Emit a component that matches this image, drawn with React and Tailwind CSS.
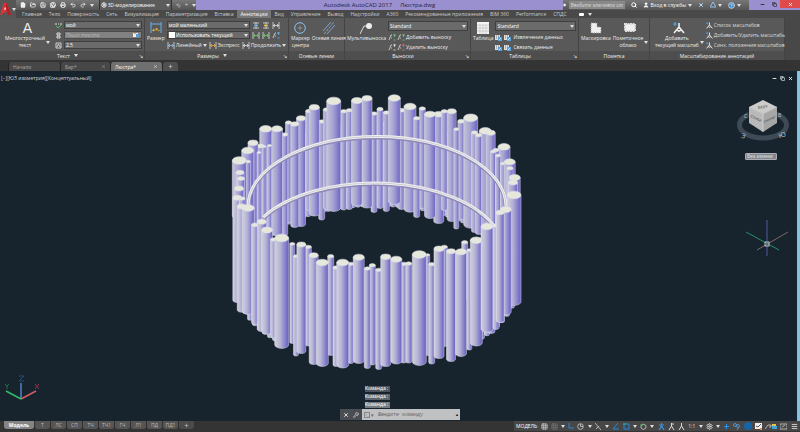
import React, { useState } from "react"
import {
  File, FolderOpen, Save, SaveAll, Printer, Undo2, Redo2, Settings, Search, User, CircleHelp,
  Minus, Copy, X, Plus, Wrench, Menu, Play, Grid3x3,
} from "lucide-react"

const ribbonTabs = [
  "Главная", "Тело", "Поверхность", "Сеть", "Визуализация", "Параметризация", "Вставка", "Аннотации", "Вид",
  "Управление", "Вывод", "Надстройки", "A360", "Рекомендованные приложения", "BIM 360", "Performance", "СПДС",
]

const layoutTabs = ["Модель", "Т", "ЛС", "СП", "ТЧ", "ТЧ1", "ГЧ", "Л1", "ПД", "ПД1"]

// [center x, cap y, width, bottom y]
const backTubes = [
  [301, 118.7, 9, 227], [308.7, 111.5, 6, 211], [288.5, 123, 6, 223], [321.7, 122, 6, 220.5], [326.3, 110, 6, 210],
  [343.7, 111.7, 6, 210.5], [349.3, 110.7, 6, 210], [374, 114, 6, 213], [380, 109.5, 6, 209], [386.3, 113, 6, 212],
  [314.3, 107.7, 10, 216.5], [294.7, 124.5, 8, 228], [333.7, 101.5, 14, 212], [357, 101, 11, 206.5], [367, 98.8, 10, 208.5],
  [401.3, 110.7, 7, 210], [394.3, 98.5, 12, 205], [422.3, 109, 6, 209], [410, 107, 12, 212.7], [416.7, 118.7, 6, 218],
  [438.7, 114.7, 10, 224], [430, 114.7, 11, 219], [444.3, 111.7, 6, 211], [451.7, 111.7, 9, 222], [461.3, 121.7, 7, 220],
  [456.3, 129.7, 5, 229.5], [470.7, 118.3, 14, 228.7], [485.3, 131.3, 12, 236], [474.5, 133, 6, 233], [478.5, 135.7, 6, 235],
  [490.7, 133.3, 9, 240], [284.7, 135, 6, 236], [274.5, 136, 6, 236], [277, 129.3, 11, 236], [265.7, 129.3, 12, 236],
  [260.5, 146.5, 7, 240], [253, 143.3, 10, 240], [259, 153, 4, 236], [264, 147, 4, 240], [269.5, 146, 4, 240],
  [247.7, 151, 12, 240],
  [504, 147.3, 12, 240], [496, 150.5, 6, 240], [493, 152, 5, 240], [498, 156, 5, 240], [503, 164, 5, 240],
  [509.7, 162.3, 11, 240], [510, 168.7, 6, 240],
  [514.7, 178, 11, 240], [513, 183, 9, 240], [248, 162, 5, 220], [239.3, 161, 14, 220],
  [240, 173, 8, 220], [241, 179, 7, 220], [239, 189, 9, 220],
]

const frontTubes = [
  [237.3, 198.3, 9, 303], [242, 199, 6, 300], [241.7, 207, 9, 312.7], [248.3, 208.5, 12, 315],
  [255, 225.3, 7, 325], [261.7, 222.3, 9, 332], [267, 230.5, 11, 334.7], [273.5, 240, 6, 338.5],
  [292.3, 244.3, 5, 344], [281.7, 238.5, 14, 349], [296, 256.7, 5, 356.5], [308.3, 247.3, 6, 346.5], [301.3, 245, 9, 354],
  [313.7, 255.7, 9, 365], [330.7, 256.7, 6, 356], [322.3, 263, 12, 367], [336, 268, 6, 367], [350.7, 264.3, 6, 364],
  [342.7, 263, 12, 368.5], [358.7, 257.7, 11, 364], [372.3, 265.7, 6, 365.5], [367.3, 269, 6, 369], [378.7, 270.3, 6, 370],
  [385.7, 257.3, 10, 367], [403.7, 264.3, 6, 363.5], [396.3, 259.7, 11, 364.5], [408.7, 264, 6, 363.5],
  [427.7, 255.3, 4, 356], [419.3, 255, 14, 366], [431.7, 264.7, 6, 364.5], [444.3, 247.3, 6, 347], [439, 249.3, 10, 359],
  [451, 251.7, 9, 362], [464.7, 242.7, 6, 300], [461, 252.3, 11, 357], [469.3, 250.7, 5, 350.5], [476.3, 240.7, 12, 346.5],
  [491, 228, 8, 334], [487, 227, 12, 332.7], [496, 226, 6, 330], [514, 195.5, 14, 306], [505.7, 210, 11, 315.3],
  [500, 213, 8, 323],
]

// thin tubes between the main ones, placed along the ring
const ringFill = (side, from, to, top, length) => {
  const tubes = []
  for (let x = from; x <= to; x += 5) {
    const k = (x - 377) / 140
    tubes.push([x, top + side * 78 * Math.sqrt(1 - k * k), 5, top + length + side * 78 * Math.sqrt(1 - k * k)])
  }
  return tubes
}

const backFill = ringFill(-1, 248, 508, 202, 83)
const frontFill = [...ringFill(1, 240, 285, 196, 92), ...ringFill(1, 482, 514, 196, 92)]

const Tube = ({ data, fill }) => {
  const [x, y, w, bottom] = data
  const r = w / 2
  const ry = r * 0.55
  return (
    <g stroke="#dddef0" strokeWidth="0.5">
      <path d={`M${x - r} ${y}V${bottom - ry}A${r} ${ry} 0 0 0 ${x + r} ${bottom - ry}V${y}Z`} fill={fill} />
      <ellipse cx={x} cy={y} rx={r} ry={ry} fill="#e6e8dc" />
    </g>
  )
}

const Chandelier = () => (
  <svg className="block h-full w-full" viewBox="0 72 797 349" role="img" aria-label="Люстра">
    <defs>
      <linearGradient id="back">
        <stop offset="0" stopColor="#c4c3d6" />
        <stop offset="0.45" stopColor="#a6a3d4" />
        <stop offset="1" stopColor="#6c64c2" />
      </linearGradient>
      <linearGradient id="front">
        <stop offset="0" stopColor="#d2d1da" />
        <stop offset="0.4" stopColor="#b5b3d6" />
        <stop offset="1" stopColor="#665ec2" />
      </linearGradient>
    </defs>
    {backFill.map((t, i) => <Tube key={i} data={t} fill="url(#back)" />)}
    {backTubes.map((t, i) => <Tube key={i} data={t} fill="url(#back)" />)}
    <g fill="none">
      <path d="M248 208A129 70 0 0 1 506 208M263 219A129 69 0 0 1 496 230" stroke="#8d89b8" strokeWidth="4" />
      <path d="M248 207A129 70 0 0 1 506 207M263 218A129 69 0 0 1 496 229" stroke="#f0f0ee" strokeWidth="3" />
      <path d="M248 207A129 70 0 0 1 506 207M263 218A129 69 0 0 1 496 229" stroke="#c4c3d0" strokeWidth="0.8" />
    </g>
    {frontFill.map((t, i) => <Tube key={i} data={t} fill="url(#front)" />)}
    {frontTubes.map((t, i) => <Tube key={i} data={t} fill="url(#front)" />)}
  </svg>
)

const Caret = () => (
  <svg className="pointer-events-none h-[3px] w-1 shrink-0" viewBox="0 0 4 3"><path d="M0 0h4L2 3z" fill="#e0e0e0" /></svg>
)

const Combo = ({ label, value, icon }) => (
  <div className="flex h-2 min-w-0 flex-1 items-center gap-px border border-[#3f3f3f] bg-[#6b6b6b] px-px">
    {icon}
    <select aria-label={label} className="min-w-0 flex-1 appearance-none bg-transparent text-[5px] leading-[6px] text-white outline-none">
      <option>{value}</option>
    </select>
    <Caret />
  </div>
)

const SmallButton = ({ icon, children, caret }) => (
  <button className="flex h-2 items-center gap-px whitespace-nowrap hover:bg-[#6d6d6d]">
    {icon}
    {children}
    {caret && <Caret />}
  </button>
)

const BigButton = ({ icon, lines, caret }) => (
  <button className="flex shrink-0 flex-col items-center gap-px whitespace-nowrap pt-[3px] leading-[7px] hover:bg-[#6d6d6d]">
    <span className="flex h-[13px] items-center">{icon}</span>
    <span className="flex items-center gap-px">
      <span>{lines.map((l) => <span key={l} className="block">{l}</span>)}</span>
      {caret && <Caret />}
    </span>
  </button>
)

const Panel = ({ title, className, children, caret, launcher }) => (
  <section className={`flex shrink-0 flex-col border-r border-[#444] ${className}`}>
    <div className="flex flex-1 gap-0.5 px-0.5">{children}</div>
    <div className="flex h-[9px] items-center justify-center gap-1 bg-[#4e4e4e] leading-[6px]">
      <span className={launcher ? "flex flex-1 items-center justify-center gap-1" : "flex items-center gap-1"}>
        {title}
        {caret && <Caret />}
      </span>
      {launcher && <button aria-label={`${title}: параметры`} className="pr-px text-[5px]">↘</button>}
    </div>
  </section>
)

const rows = "flex min-w-0 flex-col gap-0.5 pt-[3px]"

const DimIcon = ({ color = "#8fb9e0" }) => (
  <svg className="h-[7px] w-2 shrink-0" viewBox="0 0 8 7" fill="none" stroke="#ddd" strokeWidth="0.8">
    <path d="M1 0v7M7 0v7" />
    <path d="M1 3.5h6M3 2L1.5 3.5 3 5M5 2l1.500 1.500L5 5" stroke={color} />
  </svg>
)

const CrossIcon = ({ color = "#e5bf4e" }) => (
  <svg className="h-[7px] w-2 shrink-0" viewBox="0 0 8 7" fill="none" stroke="#d8d8d8" strokeWidth="0.8">
    <path d="M1 1h6M1 6h6M4 0v7" />
    <path d="M2 3.500h4" stroke={color} strokeWidth="1.500" />
  </svg>
)

const LeaderIcon = ({ color = "#69c585" }) => (
  <svg className="h-[7px] w-2 shrink-0" viewBox="0 0 8 7" fill="none" stroke="#ddd" strokeWidth="0.8">
    <path d="M1 6l2-5h1M3 4h1" />
    <path d="M5 1h3M6.500 0v3M5.500 6h2" stroke={color} />
  </svg>
)

const SheetIcon = () => (
  <svg className="mr-px h-[7px] w-[7px] shrink-0" viewBox="0 0 7 7">
    <path d="M0 1h5v5H0z" fill="#e0e0e0" />
    <path d="M1 2h1M3 2h1M1 4h1" stroke="#555" strokeWidth="0.7" />
    <path d="M3 3h4v4H3z" fill="#58a3da" />
    <path d="M4 6l2-2" stroke="#fff" strokeWidth="0.7" />
  </svg>
)

const ScaleIcon = ({ big }) => (
  <svg className={big ? "h-3 w-3 shrink-0" : "h-[7px] w-[7px] shrink-0"} viewBox="0 0 12 12" fill="none" stroke="#eee" strokeWidth="1.600">
    <path d="M6 1v4L1 11M6 5l5 6M4 8l2 1 2-1" />
    <path d="M0 2h4M2 0v4" stroke="#4da3e0" strokeWidth="1.200" />
  </svg>
)

const TitleBar = () => (
  <div className="flex h-2.5 items-center text-[5px]">
    <div className="flex h-full w-[180px] shrink-0 items-center justify-between bg-linear-to-b from-[#777] to-[#555] pl-1 text-[#eee]">
      <div className="flex items-center gap-1">
        <button aria-label="Создать"><File size={6} fill="#eee" /></button>
        <button aria-label="Открыть"><FolderOpen size={6} strokeWidth={3} /></button>
        <button aria-label="Сохранить"><Save size={6} strokeWidth={3} /></button>
        <button aria-label="Сохранить как"><SaveAll size={6} strokeWidth={3} /></button>
        <button aria-label="Печать"><Printer size={6} strokeWidth={3} /></button>
        <button aria-label="Отменить"><Undo2 size={6} strokeWidth={3} /></button>
        <button aria-label="Повторить"><Redo2 size={6} strokeWidth={3} /></button>
        <Caret />
      </div>
      <div className="flex h-2.5 w-[73px] items-center gap-px border-x border-[#333] bg-[#5c5c5c] px-px">
        <Settings size={6} strokeWidth={4} />
        <select aria-label="Рабочее пространство" className="min-w-0 flex-1 appearance-none bg-transparent text-[5px] leading-[6px] text-white">
          <option>3D-моделирование</option>
        </select>
        <Caret />
      </div>
      <span className="flex w-5 items-center gap-1"><Undo2 size={5} />÷<Caret /></span>
    </div>
    <h1 className="flex h-full min-w-0 flex-1 items-center justify-center gap-2 whitespace-nowrap bg-[#9b90cf] text-[6px] leading-[8px] text-[#25213c]">
      <span>Autodesk AutoCAD 2017</span>
      <span>Люстра.dwg</span>
    </h1>
    <div className="flex h-full w-[186px] shrink-0 items-center gap-1.5 bg-linear-to-b from-[#777] to-[#555] pr-2 text-white">
      <div className="flex h-full flex-1 items-center gap-0.5">
        <Play size={4} fill="#fff" />
        <input aria-label="Поиск" placeholder="Введите ключевое слово/фразу" className="h-2 w-full min-w-0 bg-[#898989] px-0.5 text-[5px] italic placeholder-[#ddd]" />
      </div>
      <button aria-label="Найти"><Search size={6} strokeWidth={4} /></button>
      <button className="flex items-center gap-0.5 whitespace-nowrap"><User size={6} fill="#fff" />Вход в службы<Caret /></button>
      <button aria-label="Exchange" className="text-[#b5daf8]"><X size={6} strokeWidth={4} /></button>
      <button aria-label="A360" className="flex items-center gap-0.5"><svg className="h-1.5 w-1.5" viewBox="0 0 6 6"><path d="M3 0l3 5H0z" fill="none" stroke="#8fc3ef" /></svg><Caret /></button>
      <button aria-label="Справка" className="flex items-center gap-0.5"><CircleHelp size={7} fill="#3f86c4" /><Caret /></button>
    </div>
    <div className="flex h-full w-[51px] shrink-0 items-start bg-[#9b90cf] text-[#222]">
      <button aria-label="Свернуть" className="flex h-2 flex-1 items-center justify-center pl-2"><Minus size={5} strokeWidth={4} /></button>
      <button aria-label="Развернуть" className="flex h-2 flex-1 items-center justify-center"><Copy size={5} strokeWidth={3} /></button>
      <button aria-label="Закрыть" className="flex h-2 w-5 items-center justify-center bg-[#df4a4d] text-white"><X size={5} strokeWidth={4} /></button>
    </div>
  </div>
)

const Ribbon = () => (
  <div className="flex h-[42px] overflow-hidden bg-[#595959] text-[5px] text-[#eee]">
    <Panel title="Текст" className="w-[145px]" caret launcher>
      <span className="w-px" />
      <BigButton icon={<span className="font-['Liberation_Sans'] text-[14px] leading-[12px]">A</span>} lines={["Многострочный", "текст"]} caret />
      <span className="w-px" />
      <div className={`${rows} flex-1`}>
        <div className="flex items-center gap-0.5">
          <svg className="h-[7px] w-[7px] shrink-0" viewBox="0 0 7 7" fill="none"><path d="M0 2h2M3 2h1M5 2h2" stroke="#ddd" strokeWidth="1.200" /><path d="M1 4l2 2 3-3" stroke="#4fc05a" /></svg>
          <Combo label="Стиль текста" value="мой" />
        </div>
        <div className="flex items-center gap-0.5">
          <svg className="h-[7px] w-[7px] shrink-0" viewBox="0 0 7 7"><path d="M2 1h3v2H2zM2 4h3v2H2z" fill="none" stroke="#ddd" /></svg>
          <div className="flex h-2 min-w-0 flex-1 items-center border border-[#4b4b4b] bg-[#818181] px-px">
            <input aria-label="Поиск текста" placeholder="Поиск текста" className="min-w-0 flex-1 text-[5px] italic placeholder-[#bbb]" />
            <svg className="h-1.5 w-[7px] shrink-0" viewBox="0 0 7 6"><path d="M0 1h5v4H0z" fill="#eee" /><path d="M3 2h3v3H3z" fill="#5c9fd8" /><path d="M1 1h2v1H1z" fill="#e8b13c" /></svg>
          </div>
        </div>
        <div className="flex items-center gap-0.5">
          <svg className="h-[7px] w-[7px] shrink-0" viewBox="0 0 7 7"><path d="M1 1h5v5H1zM2 5l1.500-3L5 5" fill="none" stroke="#eee" strokeWidth="0.8" /></svg>
          <Combo label="Высота текста" value="2.5" />
        </div>
      </div>
    </Panel>
    <Panel title="Размеры" className="w-[144px]" caret launcher>
      <BigButton
        icon={<svg className="h-3 w-3" viewBox="0 0 12 12" fill="none" stroke="#6fb0e8"><path d="M1 0v11M11 0v11M1 2h10" /><path d="M3 9a3.500 3.500 0 0 1 6 0" stroke="#e8b13c" strokeDasharray="2 1" strokeWidth="2" /></svg>}
        lines={["Размер"]}
      />
      <div className={`${rows} flex-1`}>
        <div className="flex items-center gap-0.5 pr-1.5">
          <Combo label="Размерный стиль" value="мой маленький" />
          <CrossIcon color="#6fb0e8" /><CrossIcon /><DimIcon color="#ddd" />
        </div>
        <div className="flex items-center gap-0.5 pr-1.5">
          <Combo label="Слой размеров" value="Использовать текущий" icon={<span className="h-1.5 w-1.5 shrink-0 bg-white" />} />
          <DimIcon color="#6dcb6b" /><DimIcon color="#6dcb6b" /><LeaderIcon color="#64b8f0" />
        </div>
        <div className="flex items-center gap-0.5">
          <SmallButton icon={<DimIcon />} caret>Линейный</SmallButton>
          <SmallButton icon={<DimIcon color="#e8a33c" />}>Экспресс</SmallButton>
          <SmallButton icon={<DimIcon color="#ddd" />} caret>Продолжить</SmallButton>
        </div>
      </div>
    </Panel>
    <Panel title="Осевые линии" className="w-14">
      <BigButton
        icon={<svg className="h-3 w-3" viewBox="0 0 12 12" fill="none" stroke="#8ec2ec"><circle cx="6" cy="6" r="5.300" /><path d="M6 3.500v5M3.500 6h5" stroke="#bbb" strokeWidth="0.500" /></svg>}
        lines={["Маркер", "центра"]}
      />
      <BigButton
        icon={<svg className="h-3 w-3" viewBox="0 0 12 12" fill="none"><path d="M0 9L8 0M4 12l8-9" stroke="#71a9d8" /><path d="M1 12L11 0" stroke="#ccc" strokeWidth="0.600" strokeDasharray="3 1" /></svg>}
        lines={["Осевая линия"]}
      />
    </Panel>
    <Panel title="Выноски" className="w-[126px]" launcher>
      <BigButton
        icon={<svg className="h-3 w-3" viewBox="0 0 12 12"><path d="M0 12L4 4h3" fill="none" stroke="#ddd" /><circle cx="9" cy="4" r="3" fill="#eee" /></svg>}
        lines={["Мультивыноска"]}
      />
      <div className={`${rows} flex-1`}>
        <Combo label="Стиль мультивыноски" value="Standard" />
        <SmallButton icon={<><LeaderIcon /><LeaderIcon color="#6dcb6b" /></>}>Добавить выноску</SmallButton>
        <SmallButton icon={<><LeaderIcon color="#ddd" /><LeaderIcon color="#ef6464" /></>}>Удалить выноску</SmallButton>
      </div>
    </Panel>
    <Panel title="Таблицы" className="w-[108px]" launcher>
      <BigButton
        icon={<svg className="h-3 w-3" viewBox="0 0 12 12"><path d="M0 0h12v12H0z" fill="#f3f3f3" /><path d="M0 3h12M0 6h12M0 9h12M3 3v9M6 3v9M9 3v9" stroke="#aaa" strokeWidth="0.500" /></svg>}
        lines={["Таблица"]}
      />
      <div className={`${rows} flex-1`}>
        <Combo label="Стиль таблицы" value="Standard" />
        <SmallButton icon={<><SheetIcon /><SheetIcon /></>}>Извлечение данных</SmallButton>
        <SmallButton icon={<><SheetIcon /><SheetIcon /></>}>Связать данные</SmallButton>
      </div>
    </Panel>
    <Panel title="Пометка" className="w-[71px]">
      <BigButton
        icon={<svg className="h-3 w-3" viewBox="0 0 12 12"><path d="M1 1h6v4h4v6H1z" fill="#f0f0f0" stroke="#999" strokeDasharray="1 1" /></svg>}
        lines={["Маскировка"]}
      />
      <BigButton
        icon={<svg className="h-3 w-3" viewBox="0 0 12 12"><rect x="1" y="2" width="10" height="7" fill="#f0f0f0" stroke="#ddd" strokeWidth="2" strokeDasharray="2 0.500" /></svg>}
        lines={["Пометочное", "облако"]}
        caret
      />
    </Panel>
    <Panel title="Масштабирование аннотаций" className="w-[135px]">
      <span className="w-px" />
      <BigButton icon={<ScaleIcon big />} lines={["Добавить", "текущий масштаб"]} caret />
      <div className={`${rows} text-[#ddd]`}>
        <SmallButton icon={<ScaleIcon />}>Список масштабов</SmallButton>
        <SmallButton icon={<ScaleIcon />}>Добавить/Удалить масштабы</SmallButton>
        <SmallButton icon={<ScaleIcon />}>Синх. положения масштабов</SmallButton>
      </div>
    </Panel>
    <div className="flex-1 bg-[#484848]" />
  </div>
)

const fileTabs = [
  { name: "Начало", className: "w-[52px] bg-[#474747] text-[#aaa]" },
  { name: "Бар*", className: "w-[50px] bg-[#474747] text-[#aaa]", close: true },
  { name: "Люстра*", className: "w-[52px] bg-[#707070] text-white", close: true },
]

const FileTabs = () => (
  <div className="flex h-[11px] items-end bg-[#343434] pl-2 text-[5px]">
    {fileTabs.map((t) => (
      <div key={t.name} className={`flex h-[9px] items-center justify-between rounded-t-[3px] border-l border-[#252525] px-1 ${t.className}`}>
        <button>{t.name}</button>
        {t.close && <button aria-label={`Закрыть ${t.name}`}><X size={5} /></button>}
      </div>
    ))}
    <button aria-label="Новый чертеж" className="flex h-[9px] w-4 items-center justify-center rounded-t-[3px] border-l border-[#252525] bg-[#505050] text-[#ccc]"><Plus size={5} strokeWidth={3} /></button>
  </div>
)

const ViewCube = () => (
  <svg className="absolute right-[7px] top-7 h-[46px] w-[54px]" viewBox="0 0 54 46">
    <ellipse cx="27" cy="26" rx="23.500" ry="13" fill="none" stroke="#3e4b57" strokeWidth="5" />
    <path d="M12 8L27 2l14 7v15L27 33 13 24z" fill="#17232d" />
    <path d="M13 8L27 1l14 7-14 7z" fill="#cbcbc9" />
    <path d="M13 8l14 7v18L13 24z" fill="#b9b9b9" />
    <path d="M41 8l-14 7v18l14-9z" fill="#a6a6a6" />
    <path d="M13 8l14 7 14-7M27 15v18" fill="none" stroke="#e2e2e2" strokeWidth="0.600" />
    <g fontFamily="Open Sans, sans-serif" fontSize="4" fill="#3f3f3f">
      <text x="22" y="9" transform="rotate(-12 27 8)">Верх</text>
      <text x="14" y="18" transform="rotate(24 14 18)">Слева</text>
      <text x="28" y="24" fontSize="3" transform="rotate(-26 28 24)">Спереди</text>
    </g>
    <g fontFamily="Open Sans, sans-serif" fontSize="7" fill="#c3c8cc">
      <text x="5" y="39" transform="rotate(20 6 38)">З</text>
      <text x="43" y="39" transform="rotate(-20 45 38)">Ю</text>
      <text x="8" y="19" fontSize="5">С</text>
      <text x="42" y="18" fontSize="5">В</text>
    </g>
  </svg>
)

const DrawingArea = () => (
  <main className="relative min-h-0 flex-1 overflow-hidden border-r-3 border-[#86c3e2] bg-[#17232d] text-[5px]">
    <Chandelier />
    <div className="absolute left-px top-1 leading-[7px] text-[#d5d9dc]">[−][ЮЗ изометрия][Концептуальный]</div>
    <div className="absolute right-1 top-[5px] flex items-center gap-[3px] text-white">
      <button aria-label="Свернуть чертеж"><Minus size={5} strokeWidth={4} /></button>
      <button aria-label="Восстановить чертеж"><Copy size={5} strokeWidth={3} /></button>
      <button aria-label="Закрыть чертеж"><X size={5} strokeWidth={4} /></button>
    </div>
    <ViewCube />
    <button className="absolute right-5 top-[82px] h-[7px] w-8 rounded-[1px] border border-[#aaacb3] bg-[#85878f] px-px text-left leading-[5px] text-[#e3e3e3]">Без имени</button>
    <svg className="absolute bottom-[165px] right-2 h-9 w-[44px]" viewBox="0 0 44 36" fill="none">
      <path d="M22 0v36" stroke="#5258a8" />
      <path d="M1 12l33 18" stroke="#27936a" />
      <path d="M12 30l31-18" stroke="#967c74" strokeWidth="0.800" />
      <rect x="20" y="22" width="4" height="4" stroke="#e0e0e0" strokeWidth="0.800" />
    </svg>
    <svg className="absolute bottom-5 left-1 h-[27px] w-9" viewBox="0 0 36 27" fill="none" strokeWidth="1.500">
      <path d="M17 25V9" stroke="#5483c4" />
      <path d="M17 25L2 17" stroke="#30bd67" />
      <path d="M17 25l15-8" stroke="#d05e62" />
      <path d="M15 2h5l-5 5h5" stroke="#254c80" strokeWidth="1" />
      <path d="M1 10l2 2 2-2M3 12v3" stroke="#286b48" strokeWidth="1" />
      <path d="M31 10l4 5M35 10l-4 5" stroke="#91334a" strokeWidth="1" />
    </svg>
    <div className="absolute bottom-px left-[340px] w-30">
      <div className="mb-px ml-[25px] flex w-[25px] flex-col gap-0.5 font-['Liberation_Mono'] text-[5px] leading-[6px] text-white">
        <span className="bg-[#4c555d]">Команда:</span>
        <span className="bg-[#5c646b]">Команда:</span>
        <span className="bg-[#737a80]">Команда:</span>
      </div>
      <div className="flex h-[11px] items-center bg-[#bfc1c3]">
        <div className="flex h-full w-[22px] items-center justify-center gap-1 bg-[#4a4e52] text-white">
          <button aria-label="Закрыть командную строку"><X size={6} strokeWidth={3} /></button>
          <button aria-label="Настройка"><Wrench size={6} /></button>
        </div>
        <span className="flex items-center gap-px px-0.5 text-[#666]"><span className="border border-[#888] text-[4px] leading-[4px]">&gt;_</span>▾</span>
        <input aria-label="Команда" placeholder="Введите команду" className="min-w-0 flex-1 px-0.5 font-['Liberation_Mono'] text-[5px] italic text-[#333] placeholder-[#666]" />
        <span className="px-px text-[4px] text-[#222]">▲</span>
      </div>
    </div>
  </main>
)

const StatusBar = () => (
  <footer className="flex h-[11px] items-start justify-between bg-[#343434] text-[5px] text-[#bbb]">
    <nav className="flex pl-1">
      {layoutTabs.map((t, i) => (
        <button
          key={t}
          className={i === 0
            ? "h-2 w-[30px] rounded-b-[3px] bg-[#858585] font-bold leading-[7px] text-white"
            : "h-2 w-4 rounded-b-[3px] border-l border-[#303030] bg-[#555] leading-[7px]"}
        >
          {t}
        </button>
      ))}
      <button aria-label="Новый лист" className="flex h-2 w-4 items-center justify-center rounded-b-[3px] border-l border-[#303030] bg-[#4b4b4b]"><Plus size={5} strokeWidth={3} /></button>
    </nav>
    <div className="flex h-2.5 w-[286px] items-center justify-between bg-[#474747] px-0.5 text-[#ddd]">
      <button className="text-white">МОДЕЛЬ</button>
      <Grid3x3 size={7} /><Grid3x3 size={7} className="text-[#777]" /><Caret />
      <svg className="h-1.5 w-1.5" viewBox="0 0 6 6"><path d="M1 0v5h5" fill="none" stroke="#2389e0" /></svg>
      <svg className="h-[7px] w-[7px]" viewBox="0 0 7 7" fill="none" stroke="#ccc" strokeWidth="0.800"><circle cx="3.500" cy="3.500" r="2.800" /><path d="M3.500 1v2.500H6" /></svg><Caret />
      <svg className="h-[7px] w-[7px]" viewBox="0 0 7 7"><path d="M0 0l6 7M1 6l3-3" stroke="#ccc" strokeWidth="0.800" /></svg><Caret />
      <svg className="h-[7px] w-[7px]" viewBox="0 0 7 7"><path d="M6 0L1 6h6" fill="none" stroke="#2389e0" /></svg>
      <svg className="h-[7px] w-[7px]" viewBox="0 0 7 7"><path d="M1 1h5v5H1z" fill="none" stroke="#2389e0" /><path d="M0 1h3" stroke="#49b75b" /></svg><Caret />
      <svg className="h-[7px] w-[7px]" viewBox="0 0 7 7" fill="none" stroke="#ccc" strokeWidth="0.800"><path d="M3 1l3 1.500V5L3.500 6.500 1 5V2.500z" /><path d="M0 2h3" stroke="#49b75b" /></svg><Caret />
      <svg className="h-[7px] w-[7px]" viewBox="0 0 7 7" fill="none" stroke="#2e93e8" strokeWidth="1.200"><path d="M3.500 0v3L1 7M3.500 3L6 7M1 2h5" /></svg>
      <svg className="h-[7px] w-[7px]" viewBox="0 0 7 7" fill="none" stroke="#ddd"><path d="M3.500 0v3L1 7M3.500 3L6 7M3 1h3" /></svg>
      <svg className="h-[7px] w-[7px]" viewBox="0 0 7 7" fill="none" stroke="#ddd"><path d="M3.500 0v3L1 7M3.500 3L6 7" /></svg>
      <button>1:1</button><Caret />
      <Settings size={7} strokeWidth={3} /><Caret />
      <Plus size={7} strokeWidth={4} className="text-[#2e93e8]" />
      <svg className="h-[7px] w-[7px]" viewBox="0 0 7 7" fill="none" stroke="#57a2dd" strokeWidth="0.800"><circle cx="2" cy="2" r="1.500" /><circle cx="5" cy="3" r="1.500" /><path d="M4 7l2-3" /></svg>
      <span className="h-2 w-2 rounded-full bg-[#1464a8]" />
      <svg className="h-[7px] w-[7px]" viewBox="0 0 7 7"><path d="M0 0h7v6H0z" fill="#eee" /><path d="M1 3l2 1 3-3" stroke="#555" fill="none" /><path d="M5 5h2v2H5z" fill="#e38b4b" /></svg>
      <svg className="h-[7px] w-3" viewBox="0 0 12 7"><path d="M0 6l3-4h3v2H4" fill="none" stroke="#ccc" strokeWidth="0.800" /><path d="M7 1h4v2H7z" fill="#e8c642" /><path d="M7 3h5v3H7z" fill="#39a5d8" /></svg>
      <svg className="h-[7px] w-[7px]" viewBox="0 0 7 7" fill="none" stroke="#ccc" strokeWidth="0.800"><path d="M0 1h7v5H0zM2 4l3-2" /></svg>
      <button aria-label="Адаптация"><Menu size={7} strokeWidth={3} /></button>
    </div>
  </footer>
)

const App = () => {
  const [active, setActive] = useState("Аннотации")

  return (
    <div className="flex h-screen flex-col overflow-hidden bg-[#343434] font-['Open_Sans','Noto_Sans',sans-serif] leading-[6px]">
      <header className="flex bg-[#494949]">
        <button aria-label="Меню приложения" className="flex w-4 shrink-0 items-center justify-center gap-px bg-[#565656]">
          <svg className="h-3 w-[11px]" viewBox="0 0 11 12"><path d="M0 12L4 0h3l4 12H8L7 9 3 10l-1 2z" fill="#e03237" /><path d="M4 7l1.500-4L6.500 6z" fill="#fff" /><path d="M7 0l4 12H8L5 3z" fill="#b41e25" /></svg>
          <Caret />
        </button>
        <div className="min-w-0 flex-1">
          <TitleBar />
          <nav className="flex h-2 items-center gap-px whitespace-nowrap pl-[3px] text-[5px] text-[#ccc]">
            {ribbonTabs.map((t) => (
              <button
                key={t}
                onClick={() => setActive(t)}
                className={t === active ? "h-2 rounded-t-[1px] bg-[#777] px-[3px] text-white" : "h-2 px-[3px]"}
              >
                {t}
              </button>
            ))}
            <button aria-label="Вид ленты" className="ml-2 flex items-center gap-1"><span className="h-[3px] w-[5px] rounded-[1px] bg-white" /><Caret /></button>
          </nav>
        </div>
      </header>
      <Ribbon />
      <FileTabs />
      <DrawingArea />
      <StatusBar />
    </div>
  )
}

export default App
